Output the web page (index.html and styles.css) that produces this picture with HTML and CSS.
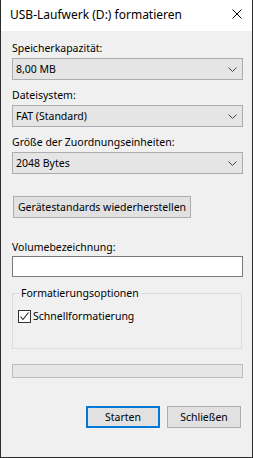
FILE: index.html
```html
<!DOCTYPE html>
<html lang="de">
<head>
<meta charset="utf-8">
<link rel="stylesheet" href="styles.css">
</head>
<body>
<div class="window">
  <div class="titlebar">
    <span class="title">USB-Laufwerk (D:) formatieren</span>
    <svg class="close" width="10" height="10" viewBox="0 0 10 10"><path d="M0.5 0.5L9.5 9.5M9.5 0.5L0.5 9.5" stroke="#000" stroke-width="1" fill="none"/></svg>
  </div>
  <div class="content">
    <div class="label l1">Speicherkapazität:</div>
    <div class="combo"><span>8,00 MB</span><svg class="chev" width="9" height="5" viewBox="0 0 9 5"><path d="M0.5 0.5L4.5 4.5L8.5 0.5" stroke="#444" fill="none"/></svg></div>
    <div class="label">Dateisystem:</div>
    <div class="combo"><span>FAT (Standard)</span><svg class="chev" width="9" height="5" viewBox="0 0 9 5"><path d="M0.5 0.5L4.5 4.5L8.5 0.5" stroke="#444" fill="none"/></svg></div>
    <div class="label">Größe der Zuordnungseinheiten:</div>
    <div class="combo"><span>2048 Bytes</span><svg class="chev" width="9" height="5" viewBox="0 0 9 5"><path d="M0.5 0.5L4.5 4.5L8.5 0.5" stroke="#444" fill="none"/></svg></div>
    <button class="btn restore">Gerätestandards wiederherstellen</button>
    <div class="label l4">Volumebezeichnung:</div>
    <div class="input"></div>
    <fieldset class="group">
      <legend>Formatierungsoptionen</legend>
      <div class="check-row">
        <span class="checkbox"><svg width="11" height="11" viewBox="0 0 11 11"><path d="M1.5 5.5L4 8.5L9.5 1.5" stroke="#222" stroke-width="1.1" fill="none"/></svg></span>
        <span>Schnellformatierung</span>
      </div>
    </fieldset>
    <div class="progress"></div>
    <div class="actions">
      <button class="btn primary">Starten</button>
      <button class="btn">Schließen</button>
    </div>
  </div>
</div>
</body>
</html>
```
FILE: styles.css
```css
* { box-sizing: border-box; }
html, body { margin: 0; padding: 0; background: #f0f0f0; }
body {
  font-family: "Noto Sans", sans-serif;
  font-size: 10.5px;
  color: #000;
}
.window {
  width: 253px;
  height: 458px;
  background: #f0f0f0;
  border-left: 1px solid #2b2b2b;
  border-right: 1px solid #2b2b2b;
  border-bottom: 1px solid #2b2b2b;
  display: flex;
  flex-direction: column;
}
.titlebar {
  height: 31px;
  background: #fff;
  display: flex;
  align-items: center;
  justify-content: space-between;
  padding: 0 10px 0 9px;
}
.title { font-size: 12px; line-height: 16px; margin-top: -2px; }
.close { margin-top: -3px; }
.content {
  padding: 0 9px 0 11px;
  display: flex;
  flex-direction: column;
}
.label { line-height: 16px; height: 16px; margin-top: 7px; margin-bottom: 2px; white-space: nowrap; }
.l1 { margin-top: 9px; }
.combo {
  height: 22px;
  width: 231px;
  background: #e5e5e5;
  border: 1px solid #adadad;
  display: flex;
  align-items: center;
  justify-content: space-between;
  padding: 0 5px 0 3px;
  line-height: 16px;
}
.chev { margin-top: 1px; }
.btn {
  font: inherit;
  color: #000;
  background: #e1e1e1;
  border: 1px solid #adadad;
  height: 22px;
  padding: 0;
  line-height: 16px;
  border-radius: 0;
  white-space: nowrap;
}
.restore { width: 178px; margin-top: 22px; margin-left: 1px; align-self: flex-start; }
.l4 { margin-top: 21px; margin-bottom: 1px; }
.input { width: 231px; height: 21px; background: #fff; border: 1px solid #7a7a7a; }
.group {
  margin: 8px 0 0 0;
  width: 230px;
  height: 64px;
  border: 1px solid #dcdcdc;
  padding: 0 0 0 5px;
}
.group legend { padding: 0 2px; margin-left: 1px; line-height: 16px; }
.check-row { display: flex; align-items: center; gap: 2px; margin-top: 7px; line-height: 16px; }
.checkbox {
  width: 13px; height: 13px;
  border: 1px solid #333;
  background: #fff;
  display: flex; align-items: center; justify-content: center;
}
.progress {
  margin-top: 15px;
  width: 231px;
  height: 14px;
  background: #e6e6e6;
  border: 1px solid #bcbcbc;
}
.actions {
  display: flex;
  justify-content: flex-end;
  gap: 7px;
  margin-top: 28px;
  padding-right: 2px;
}
.actions .btn { width: 74px; }
.primary { border: 2px solid #0078d7; }
```
